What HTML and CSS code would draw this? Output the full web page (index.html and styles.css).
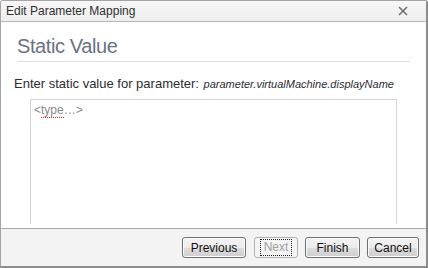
FILE: index.html
```html
<!DOCTYPE html>
<html lang="en">
<head>
    <meta charset="UTF-8">
    <title>Edit Parameter Mapping</title>
    <link rel="stylesheet" href="styles.css">
</head>
<body>
    <div class="window">
        <div class="titlebar">
            <span class="title">Edit Parameter Mapping</span>
            <svg class="close" width="10" height="10" viewBox="0 0 10 10">
                <path d="M1 1 L9 9 M9 1 L1 9" stroke="#707070" stroke-width="1.6" fill="none"/>
            </svg>
        </div>
        <div class="content">
            <h2 class="heading">Static Value</h2>
            <div class="prompt">
                Enter static value for parameter:
                <span class="param">parameter.virtualMachine.displayName</span>
            </div>
            <div class="editor">
                <div class="placeholder">&lt;<span class="misspelt">type</span>&hellip;&gt;</div>
            </div>
        </div>
        <div class="footer">
            <button class="btn btn-prev">Previous</button>
            <button class="btn btn-next" disabled><span class="focus">Next</span></button>
            <button class="btn btn-finish">Finish</button>
            <button class="btn btn-cancel">Cancel</button>
        </div>
    </div>
</body>
</html>
```

FILE: styles.css
```css
body {
    margin: 0;
    background: #ffffff;
    font-family: "Liberation Sans", Arial, sans-serif;
}

.window {
    width: 428px;
    height: 268px;
    box-sizing: border-box;
    border: 1px solid #a4a4a4;
    border-right: 2px solid #8c8c8c;
    border-bottom: 2px solid #8c8c8c;
    border-radius: 3px 3px 0 0;
    display: flex;
    flex-direction: column;
    overflow: hidden;
}

.titlebar {
    height: 20px;
    background: linear-gradient(#f7f7f7, #eeeeee);
    border-bottom: 1px solid #b4b4b4;
    display: flex;
    align-items: center;
    justify-content: space-between;
    padding: 0 18px 0 5px;
    flex-shrink: 0;
}

.title {
    font-size: 12px;
    color: #303030;
}

.close {
    display: block;
}

.content {
    flex: 1;
    background: #ffffff;
    padding: 13px 16px 0 16px;
}

.heading {
    margin: 0;
    font-weight: normal;
    font-size: 20px;
    letter-spacing: -0.4px;
    color: #6b7282;
    padding: 0 0 4px 0;
    border-bottom: 1px solid #dcdcdc;
    height: 22px;
}

.prompt {
    margin: 14px 0 0 -3px;
    font-size: 13px;
    color: #2c2c34;
    white-space: nowrap;
}

.param {
    font-style: italic;
    font-size: 11px;
    margin-left: 1px;
}

.editor {
    margin: 8px 13px 0 13px;
    height: 118px;
    border: 1px solid #d4d4d4;
    border-bottom: none;
    padding: 3px 3px;
}

.placeholder {
    font-size: 12px;
    color: #8a8a8a;
}

.misspelt {
    border-bottom: 1px dotted #e02020;
}

.footer {
    height: 37px;
    flex-shrink: 0;
    border-top: 1px solid #a9a9a9;
    background: #f3f3f3;
    display: flex;
    justify-content: flex-end;
    align-items: center;
    gap: 7px;
    padding-right: 7px;
}

.btn {
    height: 21px;
    box-sizing: border-box;
    border: 1px solid #707070;
    border-radius: 3px;
    background: linear-gradient(#f3f3f3 0%, #ebebeb 50%, #dddddd 51%, #cfcfcf 100%);
    font-family: "Liberation Sans", Arial, sans-serif;
    font-size: 12px;
    color: #101010;
    padding: 0;
    box-shadow: inset 0 0 0 1px #fbfbfb;
}

.btn-prev {
    width: 64px;
    margin-right: 1px;
}

.btn-next {
    width: 44px;
    border-color: #adb2b5;
    background: #f4f4f4;
    color: #a0a0a0;
    box-shadow: none;
    display: flex;
    align-items: center;
    justify-content: center;
}

.btn-finish {
    width: 55px;
}

.btn-cancel {
    width: 52px;
}

.focus {
    display: block;
    padding: 1px 3px;
    line-height: 13px;
    border: 1px dotted #202020;
}
```
